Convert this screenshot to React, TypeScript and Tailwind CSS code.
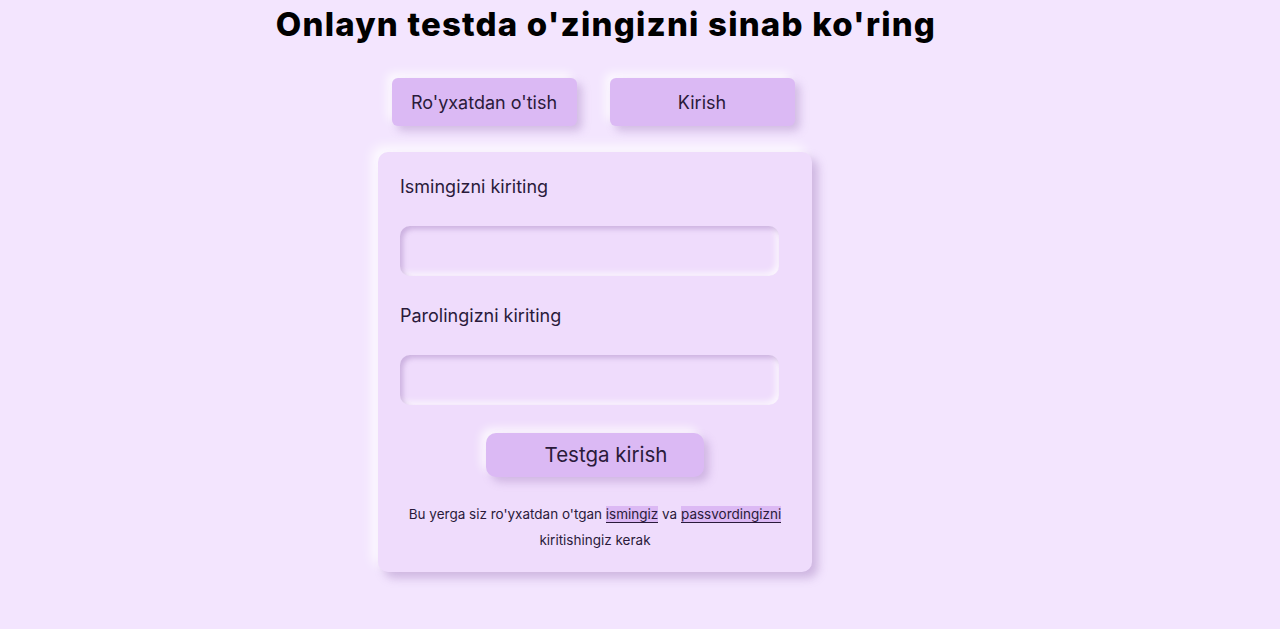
import React from "react";

export default function App() {
  return (
    <div className="min-h-[629px] w-full bg-[#f3e5fe] text-[#2a1a3a] font-['Inter','Noto_Sans',sans-serif]">
      <div className="flex justify-center pr-[68px]">
        <h1 className="m-0 h-[48px] text-[33px] leading-[48px] font-extrabold tracking-[1.2px] text-black">
          Onlayn testda o'zingizni sinab ko'ring
        </h1>
      </div>

      <div className="flex justify-center gap-[33px] pr-[94px] mt-[30px]">
        <button className="w-[185px] h-[48px] rounded-[6px] bg-[#dbb9f4] text-[18px] text-[#2a1a3a] shadow-[5px_5px_8px_rgba(150,110,180,0.35),-5px_-5px_10px_rgba(255,255,255,0.8)]">
          Ro'yxatdan o'tish
        </button>
        <button className="w-[185px] h-[48px] rounded-[6px] bg-[#dbb9f4] text-[18px] text-[#2a1a3a] shadow-[5px_5px_8px_rgba(150,110,180,0.35),-5px_-5px_10px_rgba(255,255,255,0.8)]">
          Kirish
        </button>
      </div>

      <div className="flex justify-center pr-[90px] mt-[26px]">
        <div className="w-[434px] rounded-[10px] bg-[#efdcfc] px-[22px] pt-[21px] pb-[19px] shadow-[6px_6px_10px_rgba(150,110,180,0.4),-6px_-6px_12px_rgba(255,255,255,0.85)]">
          <label className="block text-[18px] leading-[27px]">Ismingizni kiriting</label>
          <input className="mt-[26px] block w-[379px] h-[50px] rounded-[10px] bg-[#efdcfc] outline-none px-3 shadow-[inset_3px_3px_5px_rgba(150,110,180,0.4),inset_-3px_-3px_6px_rgba(255,255,255,0.8)]" />
          <label className="mt-[26px] block text-[18px] leading-[27px]">Parolingizni kiriting</label>
          <input
            type="password"
            className="mt-[26px] block w-[379px] h-[50px] rounded-[10px] bg-[#efdcfc] outline-none px-3 shadow-[inset_3px_3px_5px_rgba(150,110,180,0.4),inset_-3px_-3px_6px_rgba(255,255,255,0.8)]"
          />
          <div className="flex justify-center mt-[28px]">
            <button className="w-[218px] h-[44px] rounded-[10px] bg-[#dbb9f4] pl-[22px] text-[20.5px] text-[#2a1a3a] shadow-[5px_5px_8px_rgba(150,110,180,0.35),-5px_-5px_10px_rgba(255,255,255,0.8)]">
              Testga kirish
            </button>
          </div>
          <p className="mt-[24px] text-center text-[13.5px] leading-[26px] text-[#2a1a3a]">
            Bu yerga siz ro'yxatdan o'tgan{" "}
            <span className="bg-[#dcb9f4] border-b border-[#2a1a3a]">ismingiz</span> va{" "}
            <span className="bg-[#dcb9f4] border-b border-[#2a1a3a]">passvordingizni</span>
            <br />
            kiritishingiz kerak
          </p>
        </div>
      </div>
    </div>
  );
}
